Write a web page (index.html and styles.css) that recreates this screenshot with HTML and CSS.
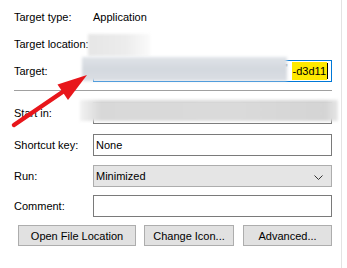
FILE: index.html
```html
<!DOCTYPE html>
<html lang="en">
<head>
    <meta charset="UTF-8">
    <title>Shortcut properties</title>
    <link rel="stylesheet" href="styles.css">
</head>
<body>
    <div class="page">
        <div class="row r-type">
            <span class="label">Target type:</span>
            <span class="value">Application</span>
        </div>
        <div class="row r-loc">
            <span class="label">Target location:</span>
            <span class="value"></span>
        </div>
        <div class="row r-target">
            <span class="label">Target:</span>
            <div class="box focused">
                <span class="quote">"</span>
                <span class="sel">-d3d11</span><span class="caret"></span>
            </div>
        </div>
        <div class="sep"></div>
        <div class="row r-start">
            <span class="label">Start in:</span>
            <div class="box"></div>
        </div>
        <div class="row r-key">
            <span class="label">Shortcut key:</span>
            <div class="box">None</div>
        </div>
        <div class="row r-run">
            <span class="label">Run:</span>
            <div class="box combo">
                <span>Minimized</span>
                <svg class="chev" width="9" height="5" viewBox="0 0 9 5"><polyline points="0.5,0.5 4.5,4.5 8.5,0.5" fill="none" stroke="#333" stroke-width="1"/></svg>
            </div>
        </div>
        <div class="row r-comment">
            <span class="label">Comment:</span>
            <div class="box"></div>
        </div>
        <div class="buttons">
            <button class="b-open">Open File Location</button>
            <button class="b-icon">Change Icon...</button>
            <button class="b-adv">Advanced...</button>
        </div>

        <!-- blurred areas over the paths -->
        <div class="blur blur-loc"></div>
        <div class="blur blur-target"></div>
        <div class="blur blur-start"></div>

        <svg class="arrow" width="347" height="268" viewBox="0 0 347 268">
            <line x1="14" y1="125" x2="64" y2="91" stroke="#e8161b" stroke-width="4.5" stroke-linecap="round"/>
            <polygon points="87,75 68,100 57.5,84.5" fill="#e8161b"/>
        </svg>
    </div>
</body>
</html>
```

FILE: styles.css
```css
body {
    margin: 0;
    background: #fff;
    font-family: "Liberation Sans", Arial, sans-serif;
    font-size: 11px;
    color: #000;
}
.page {
    position: relative;
    width: 347px;
    height: 268px;
    overflow: hidden;
    box-sizing: border-box;
    padding: 8px 0 0 14px;
}
.page::after {
    content: "";
    position: absolute;
    top: 0;
    bottom: 0;
    left: 341px;
    width: 1px;
    background: #e3e3e3;
}
.row {
    display: flex;
    align-items: center;
    height: 22px;
    width: 318px;
}
.label {
    width: 79px;
    flex: none;
    white-space: nowrap;
}
.r-type { height: 18px; }
.r-loc { height: 18px; margin-top: 9px; }
.r-target { margin-top: 7px; }
.r-start { margin-top: 11px; }
.r-key { margin-top: 10px; }
.r-run { margin-top: 9px; }
.r-comment { margin-top: 8px; }
.box {
    box-sizing: border-box;
    width: 239px;
    height: 22px;
    border: 1px solid #7a7a7a;
    display: flex;
    align-items: center;
    padding-left: 2px;
}
.focused {
    border-color: #0078d7;
    justify-content: flex-end;
    padding-right: 3px;
}
.quote {
    color: #666;
    margin-right: 4px;
    font-size: 10px;
    align-self: flex-start;
    margin-top: 2px;
}
.sel {
    background: #ffe900;
    padding: 2px 1px;
    line-height: 14px;
}
.caret {
    width: 1px;
    height: 16px;
    background: #000;
}
.sep {
    width: 318px;
    height: 1px;
    background: #a0a0a0;
    margin-top: 8px;
}
.combo {
    background: #e5e5e5;
    border-color: #adadad;
    justify-content: space-between;
    padding-right: 8px;
}
.chev {
    margin-top: 2px;
}
.buttons {
    display: flex;
    margin: 8px 0 0 4px;
}
button {
    font: inherit;
    color: #000;
    height: 21px;
    background: #e1e1e1;
    border: 1px solid #adadad;
    border-radius: 0;
    padding: 0;
}
.b-open { width: 118px; }
.b-icon { width: 90px; margin-left: 8px; }
.b-adv { width: 89px; margin-left: 9px; }
.blur {
    position: absolute;
    filter: blur(1.5px);
}
.blur-loc {
    left: 88px;
    top: 34px;
    width: 62px;
    height: 22px;
    background: linear-gradient(90deg, #e6e6e6, #ececec 60%, #fafafa);
}
.blur-target {
    left: 82px;
    top: 57px;
    width: 205px;
    height: 24px;
    background: linear-gradient(180deg, #dfe3e8, #d3d8de 50%, #dadee3);
}
.blur-start {
    left: 80px;
    top: 100px;
    width: 258px;
    height: 21px;
    background: linear-gradient(90deg, #f2f2f2, #d8d8d8 8%, #dadada 60%, #d4d4d4 95%, #e6e6e6);
}
.arrow {
    position: absolute;
    left: 0;
    top: 0;
}
```
